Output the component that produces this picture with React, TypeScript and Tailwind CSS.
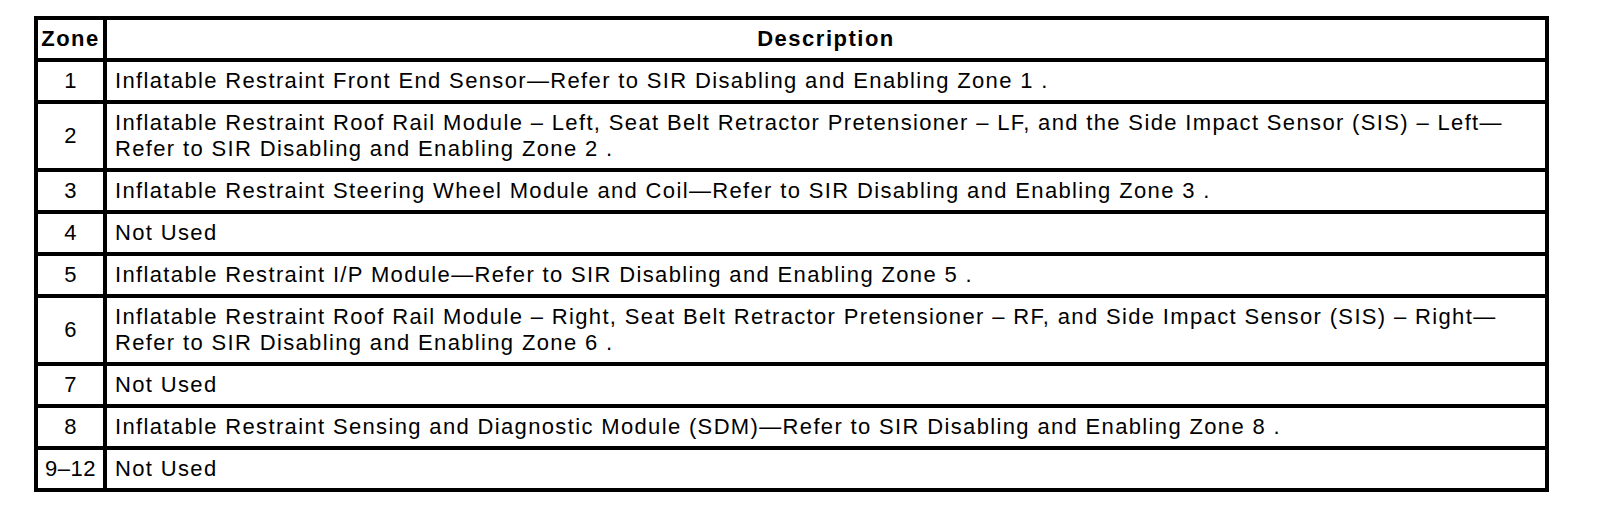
import React from 'react';

type Row = { zone: string; lines: string[] };

const rows: Row[] = [
  { zone: '1', lines: ['Inflatable Restraint Front End Sensor—Refer to SIR Disabling and Enabling Zone 1 .'] },
  {
    zone: '2',
    lines: [
      'Inflatable Restraint Roof Rail Module – Left, Seat Belt Retractor Pretensioner – LF, and the Side Impact Sensor (SIS) – Left—',
      'Refer to SIR Disabling and Enabling Zone 2 .',
    ],
  },
  { zone: '3', lines: ['Inflatable Restraint Steering Wheel Module and Coil—Refer to SIR Disabling and Enabling Zone 3 .'] },
  { zone: '4', lines: ['Not Used'] },
  { zone: '5', lines: ['Inflatable Restraint I/P Module—Refer to SIR Disabling and Enabling Zone 5 .'] },
  {
    zone: '6',
    lines: [
      'Inflatable Restraint Roof Rail Module – Right, Seat Belt Retractor Pretensioner – RF, and Side Impact Sensor (SIS) – Right—',
      'Refer to SIR Disabling and Enabling Zone 6 .',
    ],
  },
  { zone: '7', lines: ['Not Used'] },
  { zone: '8', lines: ['Inflatable Restraint Sensing and Diagnostic Module (SDM)—Refer to SIR Disabling and Enabling Zone 8 .'] },
  { zone: '9–12', lines: ['Not Used'] },
];

export default function App() {
  return (
    <div className="w-[1600px] h-[510px] bg-white pt-4 pl-[34px] font-['Liberation_Sans',Arial,sans-serif] text-black">
      <div className="w-[1515px] grid grid-cols-[65px_1fr] gap-[4px] p-[4px] bg-black text-[22px] leading-[26px] tracking-[1.35px]">
        <div className="bg-white py-[6px] text-center font-bold tracking-[1.5px] whitespace-nowrap">Zone</div>
        <div className="bg-white py-[6px] text-center font-bold tracking-[1.5px]">Description</div>
        {rows.map((row) => (
          <React.Fragment key={row.zone}>
            <div className="bg-white py-[6px] flex items-center justify-center whitespace-nowrap tracking-[0.5px]">{row.zone}</div>
            <div className="bg-white py-[6px] pl-[8px] whitespace-nowrap">
              {row.lines.map((line, i) => (
                <div key={i}>{line}</div>
              ))}
            </div>
          </React.Fragment>
        ))}
      </div>
    </div>
  );
}
